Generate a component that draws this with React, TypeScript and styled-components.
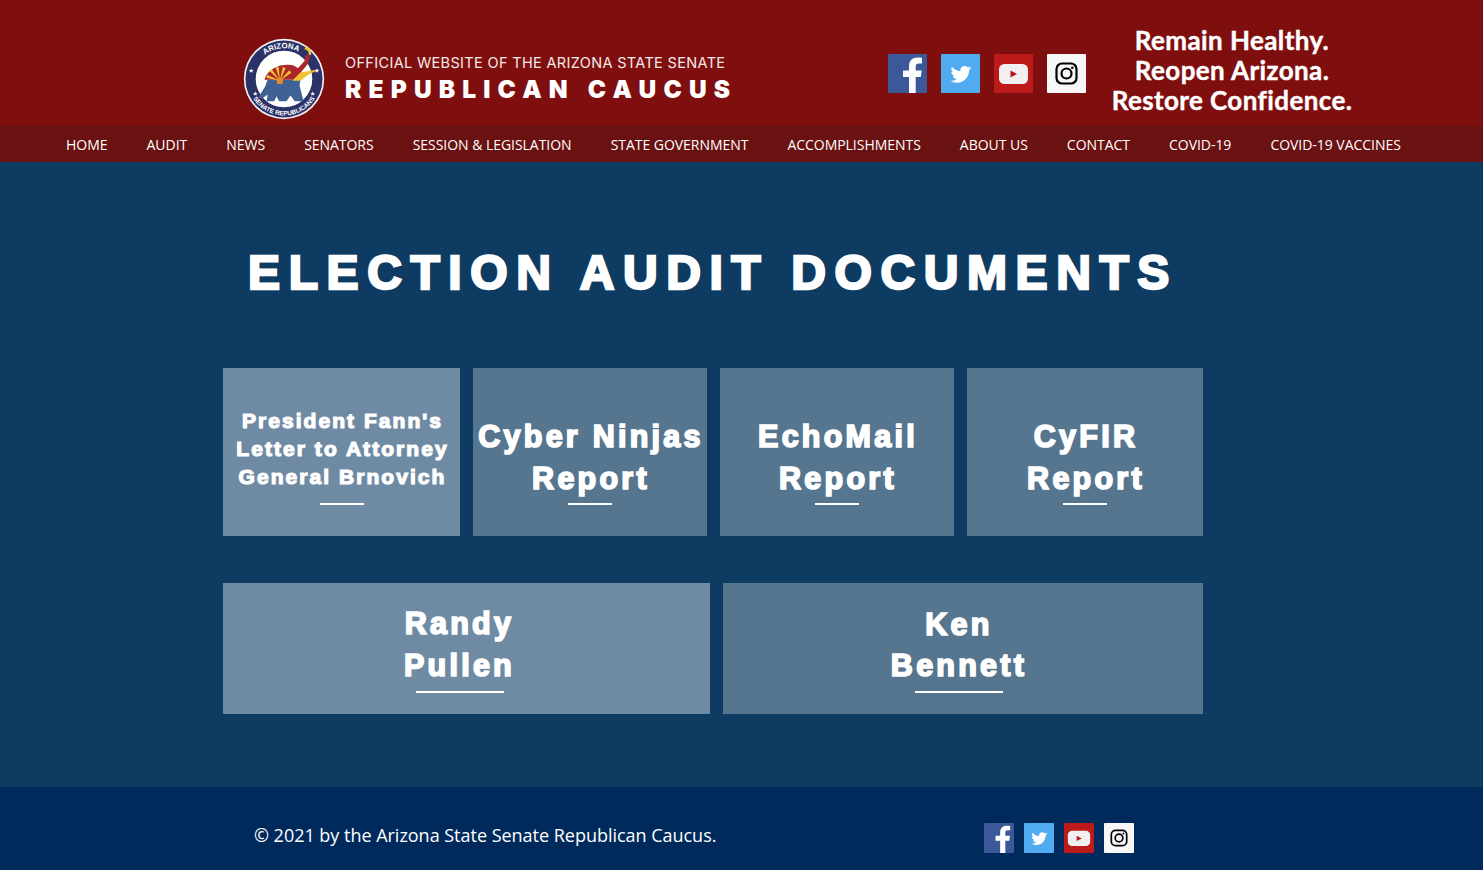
import React from "react";
import styled, { createGlobalStyle } from "styled-components";

const Global = createGlobalStyle`
  html, body { margin: 0; padding: 0; background: #0d3b61; }
  * { box-sizing: border-box; }
`;

const Page = styled.div`
  width: 1483px;
  height: 870px;
  overflow: hidden;
  display: flex;
  flex-direction: column;
`;
const Header = styled.header`
  height: 126px;
  background: #7f0f0f;
  display: flex;
  align-items: flex-start;
  padding-left: 243px;
`;
const Logo = styled.svg`
  width: 82px;
  height: 82px;
  flex: none;
  margin-top: 38px;
`;
const Brand = styled.div`
  margin: 54px 0 0 20px;
  width: 543px;
  display: flex;
  flex-direction: column;
  color: #fff;
`;
const Official = styled.div`
  font: 400 14.5px/18px "Inter", "Liberation Sans", sans-serif;
  letter-spacing: 0.34px;
  color: #f6e9e9;
`;
const Caucus = styled.div`
  margin-top: 2px;
  font: 900 24.5px/30px "Inter", "Liberation Sans", sans-serif;
  letter-spacing: 7.15px;
  word-spacing: 1px;
  white-space: nowrap;
`;
const Socials = styled.div<{ $size: number; $gap: number; $top?: number }>`
  display: flex;
  gap: ${(p) => p.$gap}px;
  margin-top: ${(p) => p.$top ?? 0}px;
  & > svg {
    width: ${(p) => p.$size}px;
    height: ${(p) => p.$size}px;
    display: block;
    flex: none;
  }
`;
const Slogan = styled.div`
  width: 266px;
  margin: 25px 0 0 13px;
  text-align: center;
  color: #fff;
  font: 700 26px/30px "Lato", "Open Sans", sans-serif;
  letter-spacing: 0.4px;
  -webkit-text-stroke: 0.4px #fff;
`;
const Nav = styled.nav`
  height: 36px;
  background: #6a1111;
  display: flex;
  align-items: center;
  padding-left: 66px;
  gap: 39.1px;
`;
const NavItem = styled.a`
  font: 400 14px/18px "Open Sans", sans-serif;
  letter-spacing: -0.04px;
  color: #fff;
  white-space: nowrap;
  margin-top: 1px;
`;
const Main = styled.main`
  flex: 1;
  background: #0d3b61;
  padding: 81px 0 0 223px;
`;
const Title = styled.h1`
  margin: 0 0 65px 0;
  width: 980px;
  text-align: center;
  height: 60px;
  color: #fff;
  font: 700 48px/60px "Liberation Sans", Arial, sans-serif;
  -webkit-text-stroke: 2.4px #fff;
  letter-spacing: 8.6px;
  white-space: nowrap;
`;
const Row = styled.div<{ $h: number; $cols: string; $mb?: number }>`
  display: grid;
  grid-template-columns: ${(p) => p.$cols};
  column-gap: 13px;
  width: 980px;
  height: ${(p) => p.$h}px;
  margin-bottom: ${(p) => p.$mb ?? 0}px;
`;
const Card = styled.a<{ $light?: boolean }>`
  position: relative;
  display: flex;
  flex-direction: column;
  align-items: center;
  background: ${(p) => (p.$light ? "#6f8ba3" : "#56768f")};
`;
const CardTitle = styled.div<{ $small?: boolean; $top: number; $shift?: number; $lh?: number }>`
  margin-top: ${(p) => p.$top}px;
  margin-left: ${(p) => p.$shift ?? 2}px;
  text-align: center;
  color: #fff;
  white-space: pre-line;
  font-family: "Liberation Sans", Arial, sans-serif;
  font-weight: 700;
  font-size: ${(p) => (p.$small ? 21 : 30.5)}px;
  line-height: ${(p) => p.$lh ?? (p.$small ? 28 : 42)}px;
  letter-spacing: ${(p) => (p.$small ? 2.05 : 3.25)}px;
  -webkit-text-stroke: ${(p) => (p.$small ? 1.2 : 1.7)}px #fff;
`;
const Rule = styled.span<{ $w: number; $bottom: number; $shift?: number }>`
  position: absolute;
  bottom: ${(p) => p.$bottom}px;
  left: calc(50% + ${(p) => p.$shift ?? 0}px);
  transform: translateX(-50%);
  width: ${(p) => p.$w}px;
  height: 2px;
  background: #fff;
`;
const Footer = styled.footer`
  height: 83px;
  background: #002a5c;
  display: flex;
  align-items: flex-start;
  padding: 36px 0 0 254px;
`;
const Copy = styled.div`
  width: 730px;
  color: #fff;
  font: 400 18px/24px "Open Sans", sans-serif;
  letter-spacing: -0.02px;
`;

function Facebook() {
  return (
    <svg viewBox="0 0 39 39">
      <rect width="39" height="39" rx="1" fill="#3b5998" />
      <path d="M21 39V23h-6v-6.500h6v-4.200C21 6.500 24.400 3.500 29.500 3.500c1.600 0 3.600.2 4.500.3v5.700h-3c-2.600 0-3.300 1.300-3.300 3.100v3.900h6l-.9 6.500h-5.100v16z" fill="#fff" />
    </svg>
  );
}
function Twitter() {
  return (
    <svg viewBox="0 0 39 39">
      <rect width="39" height="39" rx="1" fill="#50abf1" />
      <path d="M29.800 13.800c-.8.400-1.600.6-2.400.7.900-.5 1.500-1.300 1.900-2.300-.8.500-1.700.9-2.700 1-.8-.8-1.900-1.300-3-1.300-2.800 0-4.800 2.600-4.100 5.200-3.500-.2-6.500-1.900-8.600-4.400-1.100 1.900-.6 4.400 1.300 5.600-.7 0-1.300-.2-1.900-.5 0 2 1.400 3.800 3.400 4.200-.6.200-1.300.2-1.900.1.500 1.700 2.100 2.900 3.900 2.900-1.800 1.400-4 2-6.200 1.800 1.900 1.200 4.100 1.900 6.500 1.900 7.900 0 12.400-6.700 12.100-12.700.9-.6 1.700-1.400 2.700-2.200z" fill="#fff" />
    </svg>
  );
}
function Youtube() {
  return (
    <svg viewBox="0 0 39 39">
      <rect width="39" height="39" rx="1" fill="#bd1a1a" />
      <rect x="5" y="10" width="29" height="20" rx="5.500" fill="#f1efef" />
      <path d="M16.500 16.500v7l6.500-3.500z" fill="#b81818" />
    </svg>
  );
}
function Instagram() {
  return (
    <svg viewBox="0 0 39 39">
      <rect width="39" height="39" rx="1" fill="#f7f7f7" />
      <rect x="9.500" y="9.500" width="20" height="20" rx="5.500" fill="none" stroke="#000" strokeWidth="2.200" />
      <circle cx="19.500" cy="19.500" r="5" fill="none" stroke="#000" strokeWidth="2.200" />
      <circle cx="25.300" cy="13.700" r="1.300" fill="#000" />
    </svg>
  );
}
function SocialIcons() {
  return (
    <>
      <Facebook />
      <Twitter />
      <Youtube />
      <Instagram />
    </>
  );
}

const star = (cx: number, cy: number) => {
  const pts: string[] = [];
  for (let i = 0; i < 10; i++) {
    const r = i % 2 ? 1.300 : 3;
    const a = -Math.PI / 2 + (i * Math.PI) / 5;
    pts.push(`${(cx + r * Math.cos(a)).toFixed(2)},${(cy + r * Math.sin(a)).toFixed(2)}`);
  }
  return pts.join(" ");
};
const rayAngles = [168, 138, 108, 78, 48];
const ray = (deg: number) => {
  const sx = 45;
  const sy = 52;
  const rad = 17;
  const a = (deg * Math.PI) / 180;
  const b = ((deg - 13) * Math.PI) / 180;
  return `M${sx} ${sy}L${(sx + rad * Math.cos(a)).toFixed(2)} ${(sy - rad * Math.sin(a)).toFixed(2)}L${(sx + rad * Math.cos(b)).toFixed(2)} ${(sy - rad * Math.sin(b)).toFixed(2)}z`;
};

function LogoMark() {
  return (
    <Logo viewBox="0 0 100 100">
      <defs>
        <path id="logoArcTop" d="M12.500 50a37.500 37.500 0 0 1 75 0" />
        <path id="logoArcBottom" d="M5.500 50a44.500 44.500 0 0 0 89 0" />
      </defs>
      <circle cx="50" cy="50" r="49" fill="#f1f1f4" />
      <circle cx="50" cy="50" r="47" fill="#2b3268" />
      <circle cx="50" cy="50" r="34.500" fill="#fff" />
      <path d="M19 72l8-13 3-8h40l-1 7 3 12 2 7H63l-5-7-5 7H44l-3-6-3 6h-9l1-8-7 5z" fill="#3f6295" />
      <path d="M26 52c2-10 12-18 24-19 7-1 13 0 17 4l8-9 1-7 5-1c1 5 0 9-3 13l-9 11-5 7H26z" fill="#a8262c" />
      {rayAngles.map((d) => (
        <path key={d} d={ray(d)} fill="#f2c230" />
      ))}
      <path d="M60 52l10-10 23-4-14 7-9 7z" fill="#f2c230" />
      <path d="M41 52a4 4 0 0 1 8 0l-1 4h-6z" fill="#e58b2b" />
      <path d="M76 10a9 9 0 0 1 7 11l-3-1a5 5 0 0 0-5-6z" fill="#f2c230" />
      <text fontFamily="'Liberation Sans', sans-serif" fontWeight="700" fontSize="9.500" fill="#fff" textAnchor="middle">
        <textPath href="#logoArcTop" startOffset="47%">ARIZONA</textPath>
      </text>
      <text fontFamily="'Liberation Sans', sans-serif" fontWeight="700" fontSize="7.800" fill="#fff" textAnchor="middle">
        <textPath href="#logoArcBottom" startOffset="50%">SENATE REPUBLICANS</textPath>
      </text>
      <polygon points={star(10, 40)} fill="#fff" />
      <polygon points={star(90, 40)} fill="#fff" />
      <polygon points={star(15, 68)} fill="#fff" />
      <polygon points={star(85, 68)} fill="#fff" />
    </Logo>
  );
}

const navItems = [
  "HOME",
  "AUDIT",
  "NEWS",
  "SENATORS",
  "SESSION & LEGISLATION",
  "STATE GOVERNMENT",
  "ACCOMPLISHMENTS",
  "ABOUT US",
  "CONTACT",
  "COVID-19",
  "COVID-19 VACCINES",
];

export default function App() {
  return (
    <Page>
      <Global />
      <Header>
        <LogoMark />
        <Brand>
          <Official>OFFICIAL WEBSITE OF THE ARIZONA STATE SENATE</Official>
          <Caucus>REPUBLICAN CAUCUS</Caucus>
        </Brand>
        <Socials $size={39} $gap={14} $top={54}>
          <SocialIcons />
        </Socials>
        <Slogan>
          Remain Healthy.
          <br />
          Reopen Arizona.
          <br />
          Restore Confidence.
        </Slogan>
      </Header>
      <Nav>
        {navItems.map((n) => (
          <NavItem key={n}>{n}</NavItem>
        ))}
      </Nav>
      <Main>
        <Title>ELECTION AUDIT DOCUMENTS</Title>
        <Row $h={168} $mb={47} $cols="237px 234px 234px 236px">
          <Card $light>
            <CardTitle $small $top={39}>{"President Fann's\nLetter to Attorney\nGeneral Brnovich"}</CardTitle>
            <Rule $w={44} $bottom={31} />
          </Card>
          <Card>
            <CardTitle $top={47}>{"Cyber Ninjas\nReport"}</CardTitle>
            <Rule $w={44} $bottom={31} />
          </Card>
          <Card>
            <CardTitle $top={47}>{"EchoMail\nReport"}</CardTitle>
            <Rule $w={44} $bottom={31} />
          </Card>
          <Card>
            <CardTitle $top={47}>{"CyFIR\nReport"}</CardTitle>
            <Rule $w={44} $bottom={31} />
          </Card>
        </Row>
        <Row $h={131} $cols="487px 480px">
          <Card $light>
            <CardTitle $top={19} $shift={-14}>{"Randy\nPullen"}</CardTitle>
            <Rule $w={88} $bottom={21} $shift={-7} />
          </Card>
          <Card>
            <CardTitle $top={21} $shift={-8} $lh={41}>{"Ken\nBennett"}</CardTitle>
            <Rule $w={88} $bottom={21} $shift={-4} />
          </Card>
        </Row>
      </Main>
      <Footer>
        <Copy>© 2021 by the Arizona State Senate Republican Caucus.</Copy>
        <Socials $size={30} $gap={10}>
          <SocialIcons />
        </Socials>
      </Footer>
    </Page>
  );
}
